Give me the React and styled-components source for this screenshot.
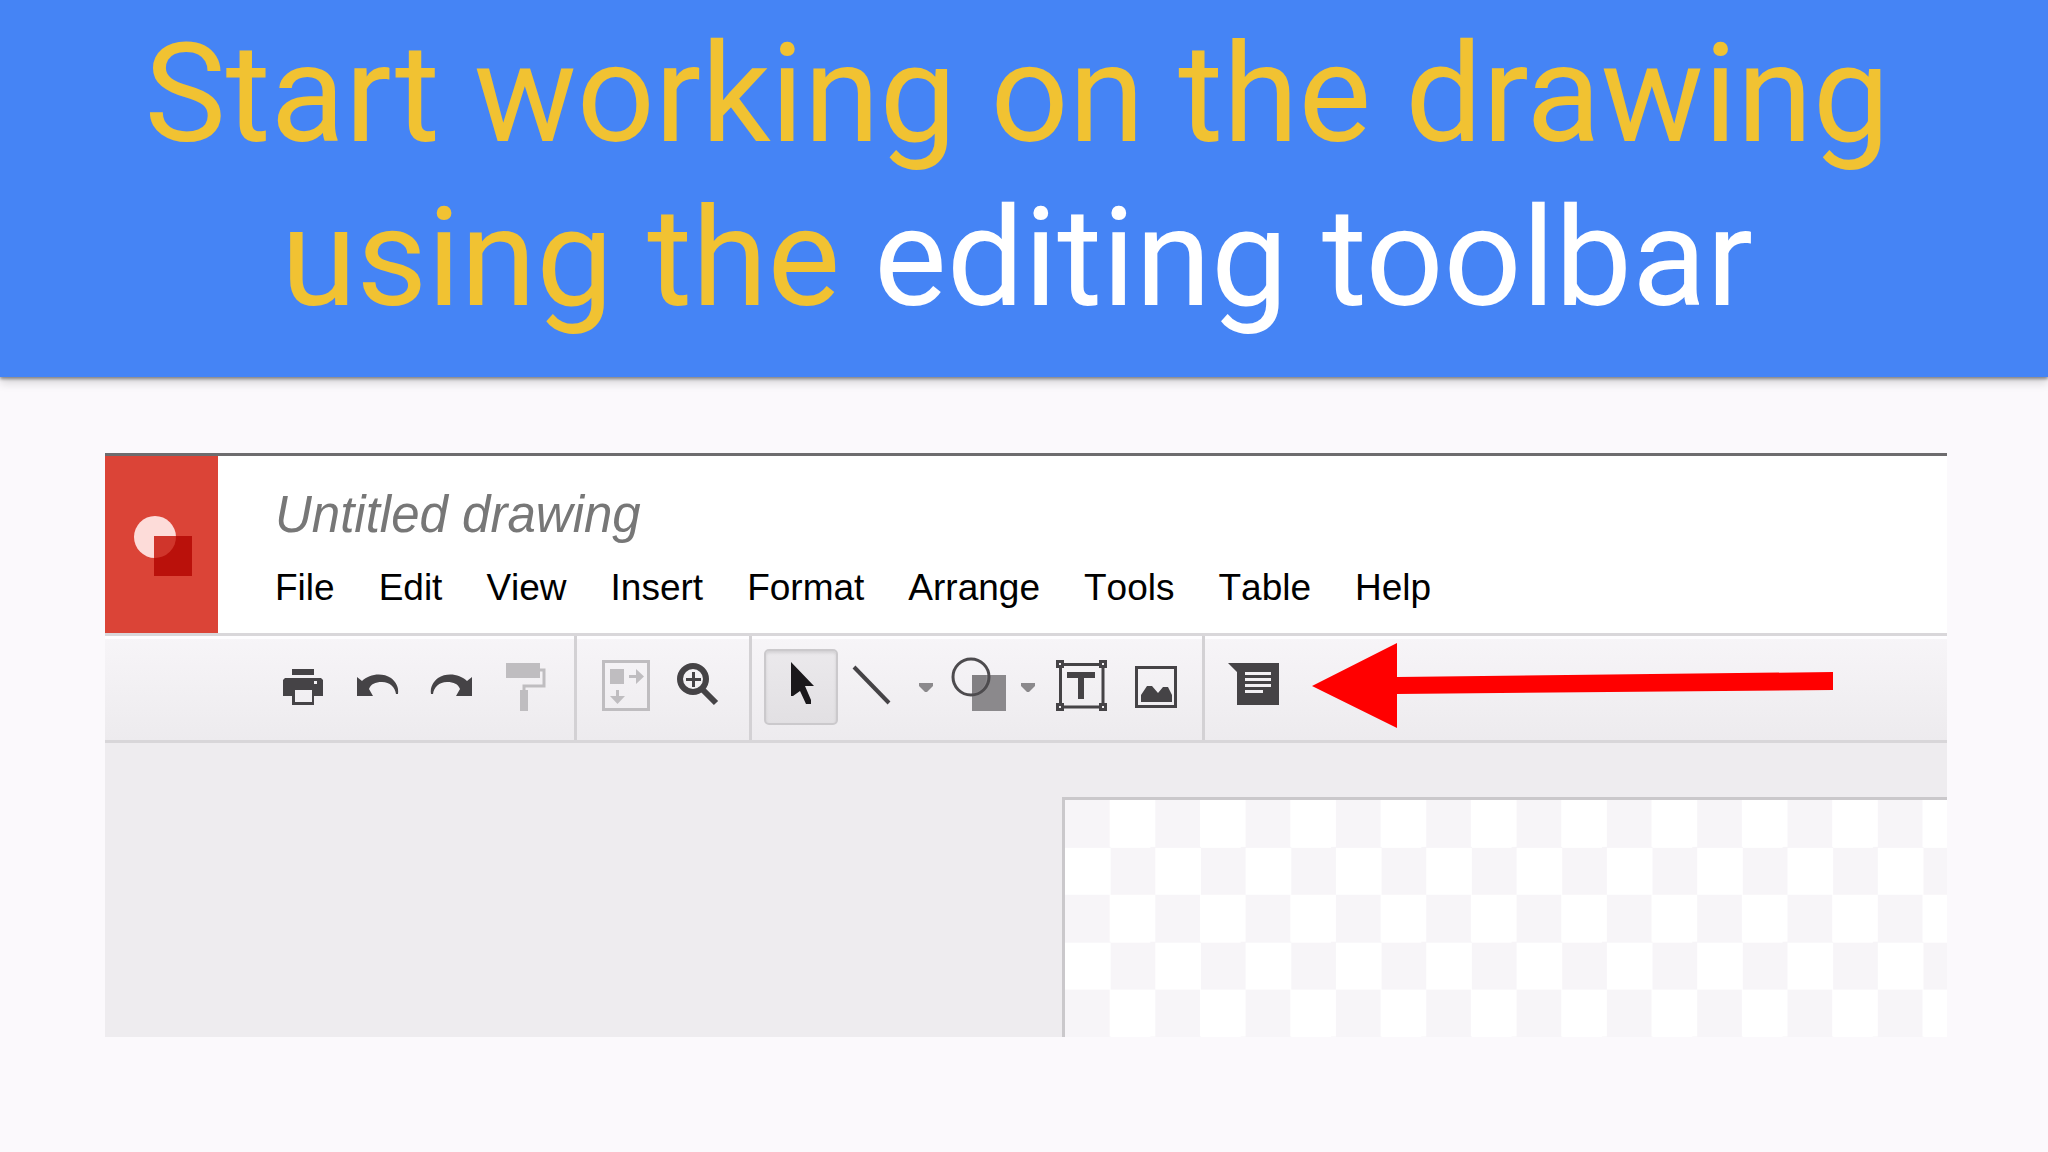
import styled, {createGlobalStyle, css} from "styled-components";


const GlobalStyle = createGlobalStyle`
  *,
  *::before,
  *::after {
    box-sizing: border-box;
  }

  body {
    margin: 0;
    background: #fbf9fc;
    font-family: "Liberation Sans", Arial, sans-serif;
  }
`;

const Banner = styled.header`
  position: relative;
  padding: 12px 14px 37px 0;
  background: #4584f5;
  box-shadow: 0 2px 3px rgba(0, 0, 0, 0.4), 0 6px 9px rgba(0, 0, 0, 0.14);
`;

const Heading = styled.h1`
  margin: 0;
  color: #f1c232;
  font-family: Roboto, sans-serif;
  font-size: 137px;
  font-weight: 400;
  line-height: 164px;
  text-align: center;
`;

const HeadingAccent = styled.span`
  color: #fff;
`;

const Editor = styled.main`
  margin: 76px 101px 0 105px;
  border-top: 3px solid #6d6c6e;
`;

const TopBar = styled.div`
  display: flex;
  height: 180px;
  background: #fff;
  border-bottom: 3px solid #d9d7da;
`;

const LogoLink = styled.a`
  display: flex;
  flex: none;
  align-items: center;
  justify-content: center;
  width: 113px;
  background: #db4437;
`;

const TitleArea = styled.div`
  padding: 29px 0 0 57px;
`;

const DocumentTitle = styled.h2`
  margin: 0;
  color: #777;
  font-size: 51px;
  font-style: italic;
  font-weight: 400;
  line-height: 60px;
`;

const MenuBar = styled.nav`
  display: flex;
  gap: 44px;
  margin-top: 21px;
`;

const MenuItem = styled.button`
  padding: 0;
  border: 0;
  background: none;
  color: #000;
  font-family: inherit;
  font-size: 37px;
  font-kerning: none;
  line-height: 44px;
`;

const Toolbar = styled.div`
  position: relative;
  display: flex;
  height: 107px;
  background: linear-gradient(#f7f5f8, #edebee);
  border-bottom: 3px solid #d8d6d9;
  box-shadow: inset 0 3px #fefdff;
`;

const ToolGroup = styled.div`
  display: flex;
  padding: 13px 12px 15px ${({$indent}) => $indent ? "161px" : "12px"};
  border-right: ${({$last}) => $last ? "0" : "3px solid #d3d1d4"};
`;

const ToolButton = styled.button`
  display: flex;
  align-items: center;
  justify-content: center;
  width: ${({$narrow}) => $narrow ? "28px" : "74px"};
  height: 76px;
  padding: 0;
  border: 0;
  background: none;
  color: #454346;

  &:disabled {
    color: #bfbdc0;
  }

  ${({$active}) => $active && css`
    border: 2px solid #cbc9cc;
    border-radius: 5px;
    background: linear-gradient(#ebe9ec, #e2e0e3);
    box-shadow: inset 0 2px 3px rgba(0, 0, 0, 0.1);
  `}
`;

const IconSvg = styled.svg`
  flex: none;
  display: block;
  overflow: visible;
`;

const Pointer = styled.svg`
  position: absolute;
  top: 7px;
  left: 1207px;
`;

const Workspace = styled.div`
  display: flex;
  height: 294px;
  padding: 54px 0 0 957px;
  background: #eeecef;
`;

const Canvas = styled.div`
  flex: 1;
  border-top: 3px solid #cac8cb;
  border-left: 3px solid #cac8cb;
  background: repeating-conic-gradient(#fff 0 25%, #f7f5f8 0 50%) 0 0 / 10.24% 40%;
`;

const Icon = ({children}) => (
  <IconSvg width="60" height="60" viewBox="0 0 60 60" fill="currentColor" aria-hidden="true">
    {children}
  </IconSvg>
);

const undoPath = "M10 20L15 24C22 17 35 15 44 21C49 25 52 30 51 37H49C48 30 43 25 35 25C28 25 24 27 22 32L26 39H10Z";

const PrintIcon = () => (
  <Icon>
    <path d="M19 12H41V18H19Z"/>
    <path fillRule="evenodd" d="M12 21H48L50 23V39H41V48H19V39H10V23ZM22 33V45H39V33ZM41 24V27H44V24Z"/>
  </Icon>
);

const UndoIcon = () => <Icon><path d={undoPath}/></Icon>;

const RedoIcon = () => <Icon><path transform="translate(61 0) scale(-1 1)" d={undoPath}/></Icon>;

const PaintIcon = () => (
  <Icon>
    <path d="M11 6H45V21H11ZM25 33H33V54H25Z"/>
    <path d="M45 13H49V29H29V34" fill="none" stroke="currentColor" strokeWidth="3"/>
  </Icon>
);

const SnapIcon = () => (
  <Icon>
    <rect x="7.5" y="4.5" width="45" height="48" fill="none" stroke="currentColor" strokeWidth="3"/>
    <path d="M14 12H28V27H14ZM33 18H40V12L48 19.5L40 27V21H33ZM20 33H23V39H29L21.5 47L14 39H20Z"/>
  </Icon>
);

const ZoomIcon = () => (
  <Icon>
    <circle cx="23" cy="22" r="13" fill="none" stroke="currentColor" strokeWidth="6"/>
    <path d="M16 22.5H31M23.5 15V30" stroke="currentColor" strokeWidth="3"/>
    <path d="M33 33L46 46" stroke="currentColor" strokeWidth="6"/>
  </Icon>
);

const CursorIcon = () => (
  <Icon><path fill="#1a181b" d="M20 5L43 29H34L40 43V47H35L29 34L22 39H20Z"/></Icon>
);

const LineIcon = () => (
  <Icon><path d="M9 10L44 46" stroke="currentColor" strokeWidth="4"/></Icon>
);

const ShapesIcon = () => (
  <Icon>
    <path fill="#8b898c" d="M25 18H59V54H25Z"/>
    <circle cx="24" cy="20" r="18" fill="none" stroke="#4d4b4e" strokeWidth="3"/>
    <path fill="#6f6d70" d="M25 18H39V20A15 15 0 0 1 25 36Z" opacity="0.35"/>
  </Icon>
);

const TextIcon = () => (
  <Icon>
    <path
      d="M8.500 4.500h5v5h-5ZM51.500 4.500h5v5h-5ZM8.500 47.500h5v5h-5ZM51.500 47.500h5v5h-5ZM15 7.500H50M15 50H50M11.500 11V46M54 11V46"
      fill="none"
      stroke="currentColor"
      strokeWidth="3"
    />
    <path d="M18 15H46V21H35V42H29V21H18Z"/>
  </Icon>
);

const ImageIcon = () => (
  <Icon>
    <rect x="13.500" y="10.500" width="39" height="39" fill="none" stroke="currentColor" strokeWidth="3"/>
    <path d="M18 45V38L24 29H29L35 36L40 30H45L49 38V45Z"/>
  </Icon>
);

const CommentIcon = () => (
  <Icon>
    <path fillRule="evenodd" d="M4 6H55V48H13V15ZM21 15V18H47V15ZM21 21V24H47V21ZM21 27V30H47V27ZM21 33V36H39V33Z"/>
  </Icon>
);

const DropArrow = () => (
  <IconSvg width="14" height="10" viewBox="0 0 14 10" fill="#8b898c" aria-hidden="true">
    <path d="M0 1H14V4L8 10H6L0 4Z"/>
  </IconSvg>
);

const Logo = () => (
  <svg width="60" height="62" viewBox="0 0 60 62" aria-hidden="true">
    <circle cx="23" cy="23" r="21" fill="#fddcd9"/>
    <path fill="#ba110b" d="M22 22H60V62H22Z"/>
    <path fill="#d0352b" d="M22 22H44A21 21 0 0 1 22 44Z"/>
  </svg>
);

const menus = ["File", "Edit", "View", "Insert", "Format", "Arrange", "Tools", "Table", "Help"];

const toolGroups = [
  [
    {label: "Print", icon: PrintIcon},
    {label: "Undo", icon: UndoIcon},
    {label: "Redo", icon: RedoIcon},
    {label: "Paint format", icon: PaintIcon, disabled: true},
  ],
  [
    {label: "Snap to", icon: SnapIcon, disabled: true},
    {label: "Zoom", icon: ZoomIcon},
  ],
  [
    {label: "Select", icon: CursorIcon, active: true},
    {label: "Line", icon: LineIcon},
    {label: "Line options", icon: DropArrow, narrow: true},
    {label: "Shape", icon: ShapesIcon},
    {label: "Shape options", icon: DropArrow, narrow: true},
    {label: "Text box", icon: TextIcon},
    {label: "Image", icon: ImageIcon},
  ],
  [
    {label: "Comment", icon: CommentIcon},
  ],
];

const App = () => (
  <>
    <GlobalStyle/>
    <Banner>
      <Heading>
        Start working on the drawing<br/>
        using the <HeadingAccent>editing toolbar</HeadingAccent>
      </Heading>
    </Banner>
    <Editor>
      <TopBar>
        <LogoLink href="#" aria-label="Drawings home">
          <Logo/>
        </LogoLink>
        <TitleArea>
          <DocumentTitle>Untitled drawing</DocumentTitle>
          <MenuBar>
            {menus.map((menu) => <MenuItem key={menu} type="button">{menu}</MenuItem>)}
          </MenuBar>
        </TitleArea>
      </TopBar>
      <Toolbar>
        {toolGroups.map((tools, index) => (
          <ToolGroup key={index} $indent={index === 0} $last={index === toolGroups.length - 1}>
            {tools.map(({label, icon: ToolIcon, disabled, active, narrow}) => (
              <ToolButton
                key={label}
                type="button"
                aria-label={label}
                disabled={disabled}
                $active={active}
                $narrow={narrow}
              >
                <ToolIcon/>
              </ToolButton>
            ))}
          </ToolGroup>
        ))}
        <Pointer width="522" height="86" viewBox="0 0 522 86" fill="#f00" aria-hidden="true">
          <path d="M0 43L85 0V34L521 29V47L85 51V85Z"/>
        </Pointer>
      </Toolbar>
      <Workspace>
        <Canvas/>
      </Workspace>
    </Editor>
  </>
);

export default App;
